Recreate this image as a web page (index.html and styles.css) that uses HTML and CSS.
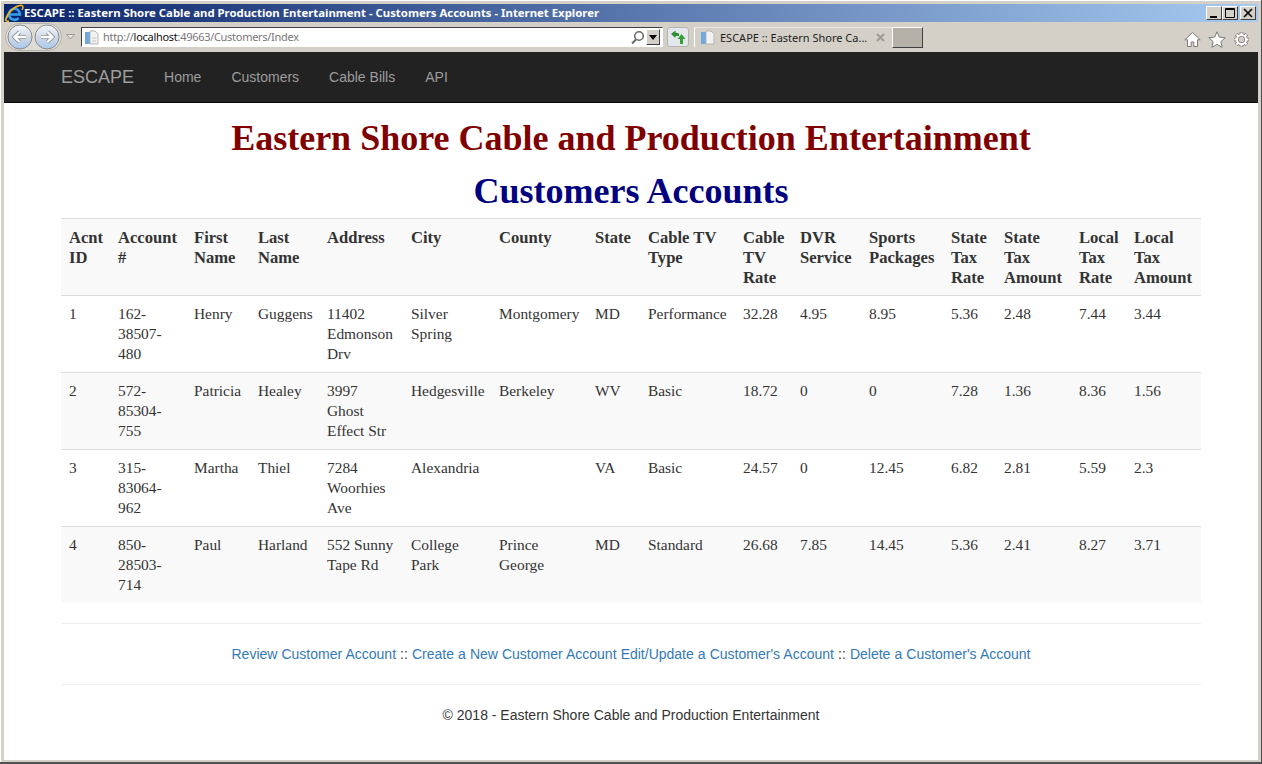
FILE: index.html
```html
<!DOCTYPE html>
<html lang="en">
<head>
<meta charset="UTF-8">
<title>ESCAPE :: Customers Accounts</title>
<link rel="stylesheet" href="styles.css">
</head>
<body>
<div class="window">
  <div class="titlebar">
    <svg class="ie-logo" width="20" height="18" viewBox="0 0 20 18">
      <path d="M5.500 10.500h10.500a5.500 5.500 0 1 0-1.400 3.500" fill="none" stroke="#35a0ee" stroke-width="2.600"/>
      <path d="M1.500 16.500C2.500 10 9 3 15.500 1.500c3.500-.8 4.200 1.500 2.500 4.500M4 11.500C1 15.500 1 18 5 17" fill="none" stroke="#f2b51d" stroke-width="1.500"/>
    </svg>
    <span class="title-text">ESCAPE :: Eastern Shore Cable and Production Entertainment - Customers Accounts - Internet Explorer</span>
    <div class="win-btns">
      <span class="win-btn"><svg width="14" height="12"><rect x="3" y="9" width="7" height="2" fill="#000"/></svg></span>
      <span class="win-btn"><svg width="14" height="12"><path d="M2.500 1.500h9v9h-9z M2 2.500h10" fill="none" stroke="#000"/></svg></span>
      <span class="win-btn close"><svg width="14" height="12"><path d="M3 2l8 8M11 2l-8 8" stroke="#000" stroke-width="1.600"/></svg></span>
    </div>
  </div>

  <div class="toolbar">
    <div class="nav-btns">
      <svg width="58" height="30" viewBox="0 0 58 30">
        <defs>
          <linearGradient id="orb" x1="0" y1="0" x2="0" y2="1">
            <stop offset="0" stop-color="#f4f7fb"/>
            <stop offset="0.5" stop-color="#cfd9e6"/>
            <stop offset="1" stop-color="#a9c8ea"/>
          </linearGradient>
        </defs>
        <rect x="0.500" y="1.500" width="56" height="27" rx="13.500" fill="#dfdcd6" stroke="#b5b3ad"/>
        <circle cx="15" cy="15" r="12" fill="url(#orb)" stroke="#8b8b8b"/>
        <circle cx="42" cy="15" r="12" fill="url(#orb)" stroke="#8b8b8b"/>
        <path d="M21 15H10M14.500 10l-5 5 5 5" fill="none" stroke="#8a8f96" stroke-width="4"/>
        <path d="M36 15h11M42.500 10l5 5-5 5" fill="none" stroke="#8a8f96" stroke-width="4"/>
        <path d="M21 15H10M14.500 10l-5 5 5 5" fill="none" stroke="#fff" stroke-width="2.400"/>
        <path d="M36 15h11M42.500 10l5 5-5 5" fill="none" stroke="#fff" stroke-width="2.400"/>
      </svg>
    </div>
    <svg class="drop-arrow" width="9" height="6"><path d="M.5.500h8L4.500 5z" fill="#e6e3dd" stroke="#9a9a96"/></svg>
    <div class="address">
      <svg class="page-icon" width="15" height="15" viewBox="0 0 15 15">
        <rect x="1" y="2" width="5" height="12" fill="#6fa8dc"/>
        <path d="M6 1h5l3 3v10H6z" fill="#f2f2f2" stroke="#b5b5b5"/>
        <path d="M8 8h4M8 11h4" stroke="#c8c8c8"/>
      </svg>
      <span class="url">http://<b>localhost</b>:49663/Customers/Index</span>
      <svg class="search" width="15" height="15" viewBox="0 0 15 15">
        <circle cx="9" cy="6" r="4.300" fill="none" stroke="#6b6b6b" stroke-width="1.600"/>
        <path d="M6 9.500L2 13.500" stroke="#6b6b6b" stroke-width="2"/>
      </svg>
      <span class="addr-drop"><svg width="8" height="5"><path d="M0 0h8L4 5z" fill="#000"/></svg></span>
    </div>
    <div class="refresh">
      <svg width="16" height="14" viewBox="0 0 16 14">
        <path d="M1 4L5.500.5v2L9 3.500V6H5.500v2z" fill="#2e8f2e"/>
        <path d="M11.500 4l4 5H13v5h-3V9H7.500z" fill="#35a035"/>
      </svg>
    </div>
    <div class="tab">
      <svg class="tab-icon" width="15" height="15" viewBox="0 0 15 15">
        <rect x="1" y="2" width="5" height="12" fill="#6fa8dc"/>
        <path d="M6 1h5l3 3v10H6z" fill="#f2f2f2" stroke="#b5b5b5"/>
      </svg>
      <span class="tab-text">ESCAPE :: Eastern Shore Ca...</span>
      <svg class="tab-close" width="9" height="9"><path d="M1 1l7 7M8 1l-7 7" stroke="#9b9b97" stroke-width="2"/></svg>
    </div>
    <div class="new-tab"></div>
    <div class="tools">
      <svg width="17" height="17" viewBox="0 0 17 17"><path d="M8.500 1.500L.8 8.800h2.700v6.700h3.700v-4.500h2.600v4.500h3.700V8.800h2.700z" fill="#fff" stroke="#7a7a76"/></svg>
      <svg width="18" height="17" viewBox="0 0 18 17"><path d="M9 .8l2.400 5.300 5.800.6-4.300 3.900 1.200 5.700L9 13.400l-5.100 2.900 1.200-5.700L.8 6.700l5.800-.6z" fill="#fff" stroke="#7a7a76"/></svg>
      <svg width="17" height="17" viewBox="0 0 17 17">
        <path d="M8.500 1v3M8.500 13v3M1 8.500h3M13 8.500h3M3.200 3.200l2 2M11.800 11.800l2 2M13.800 3.200l-2 2M5.200 11.800l-2 2" stroke="#7a7a76" stroke-width="3.600"/>
        <circle cx="8.500" cy="8.500" r="4.500" fill="none" stroke="#7a7a76" stroke-width="3.600"/>
        <path d="M8.500 1.500v3M8.500 12.500v3M1.500 8.500h3M12.500 8.500h3M3.500 3.500l2 2M11.500 11.500l2 2M13.500 3.500l-2 2M5.500 11.500l-2 2" stroke="#fff" stroke-width="2"/>
        <circle cx="8.500" cy="8.500" r="4.500" fill="none" stroke="#fff" stroke-width="2"/>
      </svg>
    </div>
  </div>

  <div class="page">
    <div class="navbar">
      <div class="nav-inner">
        <a class="brand" href="#">ESCAPE</a>
        <a class="nav-link" href="#">Home</a>
        <a class="nav-link" href="#">Customers</a>
        <a class="nav-link" href="#">Cable Bills</a>
        <a class="nav-link" href="#">API</a>
      </div>
    </div>

    <div class="container">
      <h1 class="main-title">Eastern Shore Cable and Production Entertainment</h1>
      <h2 class="sub-title">Customers Accounts</h2>

      <table class="accounts">
        <colgroup>
          <col class="c49"><col class="c76"><col class="c64"><col class="c69"><col class="c84"><col class="c88"><col class="c96"><col class="c53"><col class="c95"><col class="c57"><col class="c69"><col class="c82"><col class="c53"><col class="c75"><col class="c55"><col class="c75">
        </colgroup>
        <thead>
          <tr>
            <th>Acnt ID</th><th>Account #</th><th>First Name</th><th>Last Name</th><th>Address</th><th>City</th><th>County</th><th>State</th><th>Cable TV Type</th><th>Cable TV Rate</th><th>DVR Service</th><th>Sports Packages</th><th>State Tax Rate</th><th>State Tax Amount</th><th>Local Tax Rate</th><th>Local Tax Amount</th>
          </tr>
        </thead>
        <tbody>
          <tr>
            <td>1</td><td>162-38507-480</td><td>Henry</td><td>Guggens</td><td>11402 Edmonson Drv</td><td>Silver Spring</td><td>Montgomery</td><td>MD</td><td>Performance</td><td>32.28</td><td>4.95</td><td>8.95</td><td>5.36</td><td>2.48</td><td>7.44</td><td>3.44</td>
          </tr>
          <tr>
            <td>2</td><td>572-85304-755</td><td>Patricia</td><td>Healey</td><td>3997 Ghost Effect Str</td><td>Hedgesville</td><td>Berkeley</td><td>WV</td><td>Basic</td><td>18.72</td><td>0</td><td>0</td><td>7.28</td><td>1.36</td><td>8.36</td><td>1.56</td>
          </tr>
          <tr>
            <td>3</td><td>315-83064-962</td><td>Martha</td><td>Thiel</td><td>7284 Woorhies Ave</td><td>Alexandria</td><td></td><td>VA</td><td>Basic</td><td>24.57</td><td>0</td><td>12.45</td><td>6.82</td><td>2.81</td><td>5.59</td><td>2.3</td>
          </tr>
          <tr>
            <td>4</td><td>850-28503-714</td><td>Paul</td><td>Harland</td><td>552 Sunny Tape Rd</td><td>College Park</td><td>Prince George</td><td>MD</td><td>Standard</td><td>26.68</td><td>7.85</td><td>14.45</td><td>5.36</td><td>2.41</td><td>8.27</td><td>3.71</td>
          </tr>
        </tbody>
      </table>

      <hr class="rule">
      <p class="actions">
        <a href="#">Review Customer Account</a> :: <a href="#">Create a New Customer Account</a> <a href="#">Edit/Update a Customer's Account</a> :: <a href="#">Delete a Customer's Account</a>
      </p>
      <hr class="rule">
      <p class="footer">&copy; 2018 - Eastern Shore Cable and Production Entertainment</p>
    </div>
  </div>
</div>
</body>
</html>
```

FILE: styles.css
```css
html, body {
  margin: 0;
  padding: 0;
  height: 100%;
  overflow: hidden;
}

body {
  font-family: "Liberation Sans", Arial, sans-serif;
  font-size: 14px;
  line-height: 20px;
  color: #333;
  background-color: #d4d0c8;
}

.window {
  box-sizing: border-box;
  height: 764px;
  padding: 4px 3px 2px 4px;
  display: flex;
  flex-direction: column;
  border-right: 1px solid #505050;
  border-bottom: 2px solid #505050;
  box-shadow: inset 1px 1px 0 #fff;
}

/* title bar */
.titlebar {
  height: 18px;
  flex: none;
  display: flex;
  align-items: center;
  background: linear-gradient(to right, #0a246a, #a6caf0);
}

.ie-logo {
  flex: none;
}

.title-text {
  margin-left: 0;
  font-family: "Noto Sans", sans-serif;
  font-size: 11.36px;
  font-weight: bold;
  line-height: 18px;
  color: #fff;
  white-space: nowrap;
}

.win-btns {
  margin-left: auto;
  margin-right: 2px;
  display: flex;
}

.win-btn {
  width: 16px;
  height: 14px;
  box-sizing: border-box;
  display: flex;
  align-items: center;
  justify-content: center;
  background-color: #d4d0c8;
  border: 1px solid;
  border-color: #fff #404040 #404040 #fff;
}

.win-btn.close {
  margin-left: 2px;
}

/* browser toolbar */
.toolbar {
  height: 30px;
  flex: none;
  display: flex;
  align-items: center;
  font-family: "Noto Sans", sans-serif;
  font-size: 11px;
}

.nav-btns {
  width: 58px;
  height: 30px;
  margin-left: 1px;
  flex: none;
}

.drop-arrow {
  margin-left: 3px;
  flex: none;
}

.address {
  margin-left: 6px;
  width: 582px;
  height: 20px;
  box-sizing: border-box;
  flex: none;
  display: flex;
  align-items: center;
  background-color: #fff;
  border: 1px solid;
  border-color: #404040 #fff #fff #404040;
}

.page-icon {
  margin-left: 2px;
  flex: none;
}

.url {
  margin-left: 4px;
  color: #777;
  letter-spacing: -0.29px;
  white-space: nowrap;
}

.url b {
  font-weight: normal;
  color: #111;
}

.search {
  margin-left: auto;
  flex: none;
}

.addr-drop {
  width: 14px;
  height: 16px;
  box-sizing: border-box;
  margin: 0 2px 0 1px;
  display: flex;
  align-items: center;
  justify-content: center;
  background-color: #d4d0c8;
  border: 1px solid;
  border-color: #fff #404040 #404040 #fff;
}

.refresh {
  margin-left: 4px;
  width: 22px;
  height: 20px;
  box-sizing: border-box;
  flex: none;
  display: flex;
  align-items: center;
  justify-content: center;
  background-color: #e4e8ec;
  border: 1px solid #b4b4b0;
  border-radius: 3px;
}

.tab {
  margin-left: 5px;
  width: 198px;
  height: 20px;
  box-sizing: border-box;
  flex: none;
  display: flex;
  align-items: center;
  border-left: 1px solid #fff;
  border-top: 1px solid #e8e6e0;
}

.tab-icon {
  margin-left: 5px;
  flex: none;
}

.tab-text {
  margin-left: 5px;
  color: #222;
  white-space: nowrap;
}

.tab-close {
  margin-left: auto;
  margin-right: 7px;
  flex: none;
}

.new-tab {
  width: 31px;
  height: 21px;
  box-sizing: border-box;
  flex: none;
  background-color: #b5b1a9;
  border: 1px solid;
  border-color: #fff #404040 #404040 #fff;
}

.tools {
  margin-left: auto;
  margin-right: 8px;
  display: flex;
  align-items: center;
  gap: 7px;
  padding-top: 4px;
}

/* page area */
.page {
  flex: 1;
  min-height: 0;
  overflow: hidden;
  background-color: #fff;
}

.navbar {
  height: 51px;
  box-sizing: border-box;
  background-color: #222;
  border-bottom: 1px solid #080808;
}

.nav-inner {
  width: 1140px;
  margin: 0 auto;
  display: flex;
  align-items: center;
  height: 50px;
}

.brand {
  font-size: 18px;
  color: #9d9d9d;
  text-decoration: none;
  margin-right: 15px;
}

.nav-link {
  padding: 0 15px;
  color: #9d9d9d;
  text-decoration: none;
}

.container {
  width: 1140px;
  margin: 0 auto;
}

.main-title {
  margin: 19px 0 10px 0;
  height: 33px;
  font-family: "Liberation Serif", Georgia, serif;
  font-size: 36px;
  font-weight: bold;
  line-height: 33px;
  text-align: center;
  color: #800000;
}

.sub-title {
  margin: 20px 0 10px 0;
  height: 33px;
  font-family: "Liberation Serif", Georgia, serif;
  font-size: 36px;
  font-weight: bold;
  line-height: 33px;
  text-align: center;
  color: #000080;
}

.accounts {
  width: 1140px;
  table-layout: fixed;
  border-collapse: collapse;
  font-family: "Liberation Serif", Georgia, serif;
  font-size: 15.4px;
}

.accounts th, .accounts td {
  padding: 8px;
  line-height: 20px;
  text-align: left;
  vertical-align: top;
  border-top: 1px solid #ddd;
}

.accounts th {
  padding: 9px 8px 7px 8px;
  font-size: 16.6px;
  vertical-align: top;
  background-color: #f9f9f9;
}

.accounts tbody tr:nth-child(even) {
  background-color: #f9f9f9;
}

.c49 { width: 49px; }
.c53 { width: 53px; }
.c55 { width: 55px; }
.c57 { width: 57px; }
.c64 { width: 64px; }
.c69 { width: 69px; }
.c75 { width: 75px; }
.c76 { width: 76px; }
.c82 { width: 82px; }
.c84 { width: 84px; }
.c88 { width: 88px; }
.c95 { width: 95px; }
.c96 { width: 96px; }

.rule {
  margin: 20px 0;
  border: 0;
  border-top: 1px solid #eee;
}

.actions {
  margin: 0;
  text-align: center;
  color: #333;
  word-spacing: 0.18px;
}

.actions a {
  color: #337ab7;
  text-decoration: none;
}

.footer {
  margin: 0;
  text-align: center;
}
```
